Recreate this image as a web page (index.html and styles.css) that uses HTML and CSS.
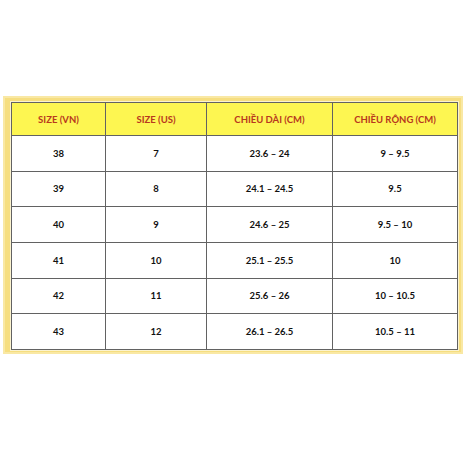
FILE: index.html
```html
<!DOCTYPE html>
<html>
<head>
<meta charset="utf-8">
<link rel="stylesheet" href="styles.css">
</head>
<body>
<div class="frame">
  <table class="sizes">
    <colgroup>
      <col class="c1"><col class="c2"><col class="c3"><col class="c4">
    </colgroup>
    <thead>
      <tr><th>SIZE (VN)</th><th>SIZE (US)</th><th>CHIỀU DÀI (CM)</th><th>CHIỀU RỘNG (CM)</th></tr>
    </thead>
    <tbody>
      <tr><td>38</td><td>7</td><td>23.6 – 24</td><td>9 – 9.5</td></tr>
      <tr><td>39</td><td>8</td><td>24.1 – 24.5</td><td>9.5</td></tr>
      <tr><td>40</td><td>9</td><td>24.6 – 25</td><td>9.5 – 10</td></tr>
      <tr><td>41</td><td>10</td><td>25.1 – 25.5</td><td>10</td></tr>
      <tr><td>42</td><td>11</td><td>25.6 – 26</td><td>10 – 10.5</td></tr>
      <tr><td>43</td><td>12</td><td>26.1 – 26.5</td><td>10.5 – 11</td></tr>
    </tbody>
  </table>
</div>
</body>
</html>
```

FILE: styles.css
```css
html, body {
  margin: 0;
  padding: 0;
  background: #ffffff;
}
body {
  width: 468px;
  height: 468px;
  padding-top: 96px;
  box-sizing: border-box;
  font-family: Lato, "Open Sans", sans-serif;
}
.frame {
  margin-left: 3px;
  width: 460px;
  height: 258px;
  box-sizing: border-box;
  padding: 6px 6px 4px 8px;
  background: #f6de80;
  box-shadow: inset 0 0 0 2px #f9e8a4;
}
.sizes {
  width: 446px;
  height: 248px;
  border-collapse: collapse;
  border: 1.5px solid #3c3c3c;
  background: #ffffff;
  table-layout: fixed;
  outline: 1px solid #fbf3cf;
}
.c1 { width: 94px; }
.c2 { width: 101px; }
.c3 { width: 126px; }
.c4 { width: 125px; }
th, td {
  border: 1.5px solid #626262;
  text-align: center;
  vertical-align: middle;
  font-weight: 700;
  font-size: 9.5px;
  padding: 0;
}
th {
  height: 32px;
  background: #fdf651;
  color: #b8381e;
}
td {
  height: 34px;
  color: #111111;
}
```
